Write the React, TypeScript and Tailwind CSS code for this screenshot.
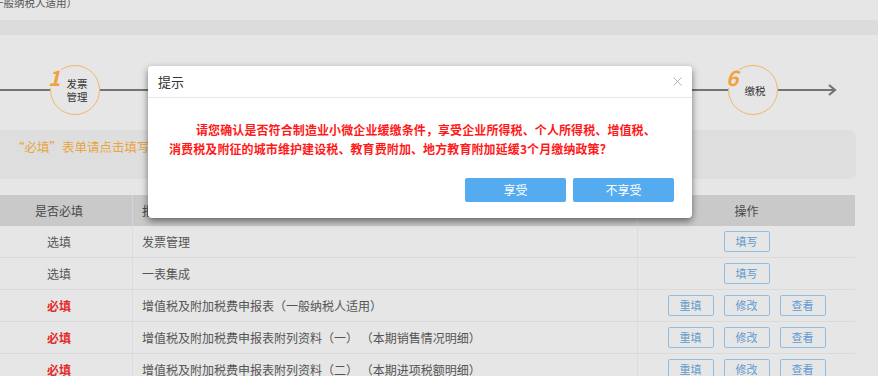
import { X } from 'lucide-react'

interface Row {
  required: boolean
  name: string
  actions: string[]
}

const rows: Row[] = [
  { required: false, name: '发票管理', actions: ['填写'] },
  { required: false, name: '一表集成', actions: ['填写'] },
  { required: true, name: '增值税及附加税费申报表（一般纳税人适用）', actions: ['重填', '修改', '查看'] },
  { required: true, name: '增值税及附加税费申报表附列资料（一） （本期销售情况明细）', actions: ['重填', '修改', '查看'] },
  { required: true, name: '增值税及附加税费申报表附列资料（二） （本期进项税额明细）', actions: ['重填', '修改', '查看'] },
]

function Step({ num, label }: { num: string; label: React.ReactNode }) {
  return (
    <div className="relative w-[50px] h-[50px] shrink-0">
      <div className="w-[50px] h-[50px] rounded-full border-[1.5px] border-[#f2b56b] flex items-center justify-center pl-[4px] text-[10.5px] leading-[13px] text-[#333] text-center">
        {label}
      </div>
      <span className="absolute -left-[3px] top-[1px] bg-[#e6e6e6] px-[1px] text-[21px] leading-[22px] font-bold italic text-[#f0a23c]">
        {num}
      </span>
    </div>
  )
}

export default function App() {
  return (
    <div
      className="relative w-[878px] h-[376px] overflow-hidden bg-[#e6e6e6]"
      style={{ fontFamily: '"Noto Sans CJK SC", "Noto Sans", sans-serif' }}
    >
      <div className="h-[20px] overflow-hidden">
        <p className="-mt-[4px] -ml-[7px] text-[10.5px] leading-[14px] text-[#555]">一般纳税人适用）</p>
      </div>
      <div className="h-[15px] bg-[#dcdcdc]" />

      {/* steps */}
      <div className="mt-[30px] h-[50px] flex items-center">
        <div className="w-[50px] h-[2px] bg-[#747474]" />
        <Step num="1" label={<span>发票<br />管理</span>} />
        <div className="flex-1 h-[2px] bg-[#747474]" />
        <Step num="6" label="缴税" />
        <svg width="62" height="14" viewBox="0 0 62 14" className="shrink-0">
          <line x1="0" y1="7" x2="57" y2="7" stroke="#747474" strokeWidth="2" />
          <path d="M51 2 L57 7 L51 12" fill="none" stroke="#747474" strokeWidth="2.2" />
        </svg>
        <div className="w-[38px]" />
      </div>

      {/* notice box */}
      <div className="mt-[15px] h-[49px] w-[856px] bg-[#dedede] rounded-r-[7px] px-[12px] pt-[9px]">
        <p className="text-[12.5px] leading-[16px] text-[#e9a53f]">
          “必填”表单请点击填写，“选填”表单请根据实际情况选择填写
        </p>
      </div>

      {/* table */}
      <div className="mt-[16px] w-[855px]">
        <div className="grid grid-cols-[133px_505px_217px] h-[31px] bg-[#c9c9c9] text-[12px] text-[#4a4a4a]">
          <div className="flex items-center justify-center pr-[14px] border-r border-[#d5d5d5]">是否必填</div>
          <div className="flex items-center pl-[9px] border-r border-[#d5d5d5]">报表名称</div>
          <div className="flex items-center justify-center">操作</div>
        </div>
        {rows.map((r) => (
          <div key={r.name} className="grid grid-cols-[133px_505px_217px] h-[32px] border-b border-[#dadada] text-[12px]">
            <div
              className={`flex items-center justify-center pr-[14px] border-r border-[#dcdcdc] ${
                r.required ? 'text-[#e42a2a] font-bold' : 'text-[#555]'
              }`}
            >
              {r.required ? '必填' : '选填'}
            </div>
            <div className="flex items-center pl-[9px] border-r border-[#dcdcdc] text-[#555] whitespace-pre">{r.name}</div>
            <div className="flex items-center justify-center gap-[10px]">
              {r.actions.map((a) => (
                <button
                  key={a}
                  className="w-[46px] h-[21px] border border-[#92bde2] rounded-[2px] text-[11px] leading-[19px] text-[#5e9ad0]"
                >
                  {a}
                </button>
              ))}
            </div>
          </div>
        ))}
      </div>

      {/* modal */}
      <div className="absolute left-[148px] top-[66px] w-[544px] h-[152px] bg-white rounded-[4px] shadow-[0_3px_7px_rgba(0,0,0,0.5)]">
        <div className="h-[32px] flex items-center justify-between pl-[10px] pr-[7px] border-b border-[#e8e8e8]">
          <span className="text-[13px] text-[#333]">提示</span>
          <X size={15} strokeWidth={1.3} className="text-[#a0a0a0]" />
        </div>
        <div className="pl-[21px] pr-[18px] pt-[22px]">
          <div className="text-[12px] leading-[19px] font-bold text-[#ff1a1a] tracking-[0.1px]">
            <p className="pl-[27px]">请您确认是否符合制造业小微企业缓缴条件，享受企业所得税、个人所得税、增值税、</p>
            <p>消费税及附征的城市维护建设税、教育费附加、地方教育附加延缓3个月缴纳政策？</p>
          </div>
          <div className="mt-[20px] flex justify-end gap-[7px]">
            <button className="w-[101px] h-[24px] bg-[#55abf0] rounded-[2px] text-[12px] text-white">享受</button>
            <button className="w-[101px] h-[24px] bg-[#55abf0] rounded-[2px] text-[12px] text-white">不享受</button>
          </div>
        </div>
      </div>
    </div>
  )
}
